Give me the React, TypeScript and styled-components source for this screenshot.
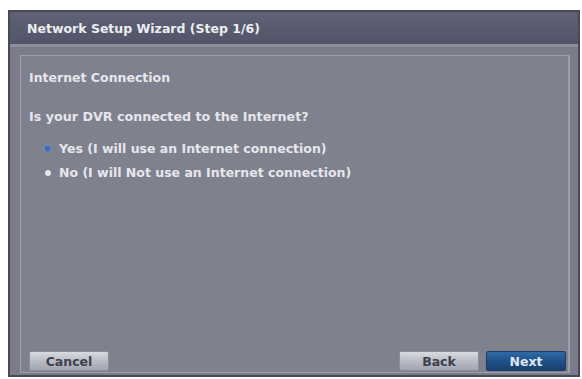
import React from "react";
import styled, { createGlobalStyle } from "styled-components";

const Global = createGlobalStyle`
  html, body { margin: 0; padding: 0; background: #ffffff; }
  body { font-family: "DejaVu Sans", Verdana, sans-serif; }
`;

const Dialog = styled.div`
  box-sizing: border-box;
  margin: 10px 0 0 8px;
  width: 572px;
  height: 367px;
  border: 2px solid #474957;
  background: #7a7c89;
  display: flex;
  flex-direction: column;
`;

const TitleBar = styled.div`
  box-sizing: border-box;
  height: 35px;
  padding: 1px 0 0 17px;
  display: flex;
  align-items: center;
  background: linear-gradient(#5f6274, #525568);
  border-bottom: 3px solid #8d8f9c;
  color: #eceef2;
  font-weight: bold;
  font-size: 12.5px;
`;

const Body = styled.div`
  flex: 1;
  display: flex;
  padding: 8px 8px 2px 10px;
`;

const Panel = styled.div`
  box-sizing: border-box;
  flex: 1;
  border: 1px solid #9c9eaa;
  border-right-width: 2px;
  background: #7f818e;
  display: flex;
  flex-direction: column;
  padding: 15px 2px 1px 8px;
`;

const Heading = styled.div`
  color: #e6e7ec;
  font-weight: bold;
  font-size: 12.5px;
  line-height: 14px;
`;

const Question = styled.div`
  margin-top: 25px;
  color: #e6e7ec;
  font-weight: bold;
  font-size: 12.7px;
  line-height: 14px;
`;

const Options = styled.div`
  margin-top: 17px;
  padding-left: 16px;
  display: flex;
  flex-direction: column;
  gap: 9px;
`;

const Option = styled.div`
  display: flex;
  align-items: center;
  gap: 8px;
  color: #e6e7ec;
  font-weight: bold;
  font-size: 12.5px;
  line-height: 15px;
`;

const Dot = styled.span<{ $on?: boolean }>`
  width: ${(p) => (p.$on ? "7px" : "6px")};
  height: ${(p) => (p.$on ? "7px" : "6px")};
  margin-left: ${(p) => (p.$on ? "-1px" : "0")};
  border-radius: 50%;
  background: ${(p) =>
    p.$on ? "radial-gradient(circle, #3f6cb0 40%, #7d9ccc)" : "#e4e5ea"};
  box-shadow: ${(p) => (p.$on ? "0 0 2px 1px rgba(120,150,200,0.6)" : "none")};
`;

const Spacer = styled.div`
  flex: 1;
`;

const Footer = styled.div`
  display: flex;
  align-items: center;
  gap: 7px;
`;

const Button = styled.button<{ $primary?: boolean }>`
  box-sizing: border-box;
  width: 80px;
  height: 20px;
  border: 1px solid ${(p) => (p.$primary ? "#1b3d68" : "#8a8e99")};
  border-radius: 2px;
  background: ${(p) =>
    p.$primary
      ? "linear-gradient(#2f6aa6, #1f4f85 55%, #1a416f)"
      : "linear-gradient(#d8dbe2, #b9bcc5 50%, #a3a6b0)"};
  color: ${(p) => (p.$primary ? "#dfe8f4" : "#3d414d")};
  font-family: "DejaVu Sans", Verdana, sans-serif;
  font-weight: bold;
  font-size: 12.5px;
  padding: 0;
  display: flex;
  align-items: center;
  justify-content: center;
`;

export default function App() {
  return (
    <>
      <Global />
      <Dialog>
        <TitleBar>Network Setup Wizard (Step 1/6)</TitleBar>
        <Body>
          <Panel>
            <Heading>Internet Connection</Heading>
            <Question>Is your DVR connected to the Internet?</Question>
            <Options>
              <Option>
                <Dot $on />
                Yes (I will use an Internet connection)
              </Option>
              <Option>
                <Dot />
                No (I will Not use an Internet connection)
              </Option>
            </Options>
            <Spacer />
            <Footer>
              <Button>Cancel</Button>
              <Spacer />
              <Button>Back</Button>
              <Button $primary>Next</Button>
            </Footer>
          </Panel>
        </Body>
      </Dialog>
    </>
  );
}
